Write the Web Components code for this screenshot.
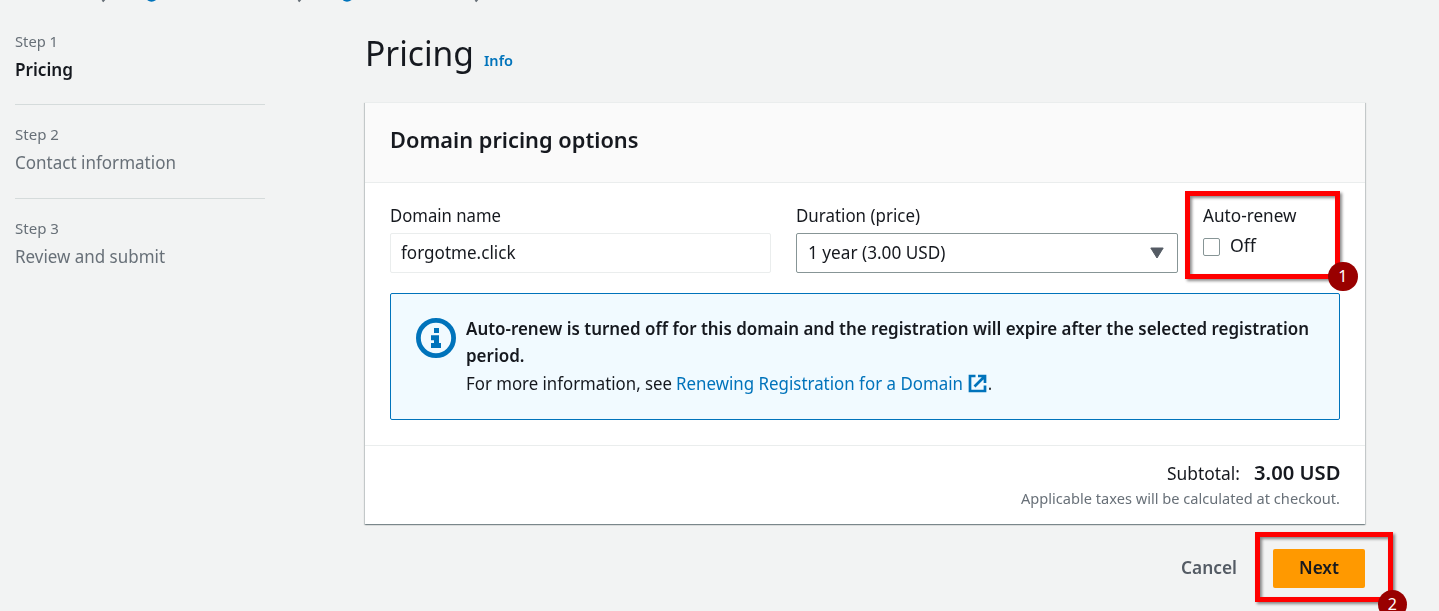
<!DOCTYPE html>
<html lang="en">
<head>
<meta charset="utf-8">
<title>Pricing</title>
<style>
html,body{margin:0;height:611px;overflow:hidden;background:#f2f3f3}
body{font-family:"Noto Sans","Open Sans",sans-serif;font-size:17.5px;color:#16191f}
</style>
</head>
<body>
<pricing-page></pricing-page>
<script>
const define = (name, html, setup) => customElements.define(name, class extends HTMLElement {
  constructor(){ super(); this.attachShadow({mode:'open'}).innerHTML = html; }
  connectedCallback(){ if (setup) setup(this, this.shadowRoot); }
});

/* A single line of text condensed or widened to the width in its "w" attribute. */
define('fit-text', `<style>
:host{display:block;flex:none;white-space:nowrap;line-height:28px;height:28px}
span{display:inline-block;vertical-align:top;transform-origin:0 0;white-space:nowrap}
</style><span><slot></slot></span>`, (el, root) => {
  const w = +el.getAttribute('w'), s = root.querySelector('span');
  el.style.width = w + 'px';
  s.style.transform = `scaleX(${w / s.getBoundingClientRect().width})`;
});

define('crumb-trail', `<style>:host{display:block;height:4px;overflow:hidden}svg{display:block}</style>
<svg width="600" height="4" fill="none" stroke-width="2.200">
<g stroke="#687078"><path d="M105.500-2 102.500 1.500M301.500-2 298.500 1.500M478.500-2 475.500 1.500"/></g>
<g stroke="#0073bb"><path d="M148-.6Q151.500 1.900 155.500-.8M343.500-.6Q347 1.900 351-.8"/></g></svg>`);

define('wizard-step', `<style>
:host{display:block;height:93.750px;box-sizing:border-box;color:#687078}
:host([active]) .t{color:#16191f;font-weight:600}
.l{font-size:15px}
:host(:not([active])) fit-text,:host(:not([active])) .l,:host(:not([active])) .t{position:relative;top:-.800px}
.rule{height:1px;background:#d5dbdb;margin-top:21px}
:host([last]) .rule{display:none}
</style><div class="l"><slot name="label"></slot></div><div class="t"><slot></slot></div><div class="rule"></div>`);

define('step-list', `<style>
:host{display:block;width:250px;margin-left:15px;padding-top:23px}
</style>
<wizard-step active><fit-text slot="label" w="43">Step 1</fit-text><fit-text w="58">Pricing</fit-text></wizard-step>
<wizard-step><fit-text slot="label" w="44">Step 2</fit-text><fit-text w="161">Contact information</fit-text></wizard-step>
<wizard-step last><fit-text slot="label" w="44">Step 3</fit-text><fit-text w="150">Review and submit</fit-text></wizard-step>`);

define('page-title', `<style>
:host{display:flex;align-items:baseline;height:69px;margin-top:29px}
.h{font-size:34px;line-height:40px;height:40px}
.i{font-size:14.5px;font-weight:600;color:#0073bb;margin-left:10px}
</style><fit-text class="h" w="109">Pricing</fit-text><fit-text class="i" w="29">Info</fit-text>`);

define('form-field', `<style>:host{display:block;padding-top:17.500px}.c{margin-top:4.500px}</style>
<slot name="label"></slot><div class="c"><slot></slot></div>`);

define('input-box', `<style>
:host{display:flex;box-sizing:border-box;height:40px;border:1px solid #eaeded;border-radius:2px;padding:4px 13px 0 10px;justify-content:space-between;background:#fff}
:host([select]){border-color:#879596;padding-left:11px}
svg{display:none;margin-top:9px}:host([select]) svg{display:block}
</style><slot></slot><svg width="14" height="12"><path d="M.8 1h12.400L7 11Z" fill="#545b64" stroke="#545b64" stroke-linejoin="round"/></svg>`);

define('check-box', `<style>
:host{display:flex;align-items:center;gap:10px;height:28px;margin-top:-2px}
i{width:15px;height:15.500px;border:1px solid #879596;border-radius:2px;background:#fff;margin-top:4px}
</style><i></i><slot></slot>`);

define('info-alert', `<style>
:host{display:flex;box-sizing:border-box;width:950px;height:127px;margin-top:20px;border:1px solid #0073bb;border-radius:2px;background:#f1faff;padding:20px 0 0 25px}
.b{margin-left:9.500px}.b>fit-text{height:27px}.bold{font-weight:600}
svg{display:block;flex:none}.info{margin-top:4px}
.r{display:flex;margin-top:1px}.link{color:#0073bb;margin-left:4px}.ext{margin:5px 1px 0 5px}
</style>
<svg class="info" width="40" height="40"><circle cx="20" cy="20" r="17.600" fill="none" stroke="#0073bb" stroke-width="4.800"/><path fill="#0073bb" d="M18 10h5v5h-5zM15 17.300h8v7.700h2v5H15v-5h3v-2.700h-3z"/></svg>
<div class="b"><fit-text class="bold" w="843">Auto-renew is turned off for this domain and the registration will expire after the selected registration</fit-text>
<fit-text class="bold" w="58.500">period.</fit-text>
<div class="r"><fit-text w="206">For more information, see</fit-text><fit-text class="link" w="287">Renewing Registration for a Domain</fit-text>
<svg class="ext" width="19" height="19" fill="none" stroke="#0073bb" stroke-width="2.700"><path d="M7.500 2H2V17H17V11.500M10 2H17V9M17 2 6.500 12.500"/></svg><fit-text w="4">.</fit-text></div></div>`);

define('pricing-card', `<style>
:host{display:block;width:1000px;height:422px;box-sizing:border-box;background:#fff;border-top:1px solid #eaeded;box-shadow:0 1px 1px 0 rgba(0,28,36,.3),1px 1px 1px 0 rgba(0,28,36,.15),-1px 1px 1px 0 rgba(0,28,36,.15)}
header{background:#fafafa;border-bottom:1px solid #eaeded;padding:22px 25px 0;box-sizing:content-box;height:57px;font-size:22px;font-weight:600}
.body{height:262px;padding:0 25px;border-bottom:1px solid #eaeded}
.row{display:grid;grid-template-columns:381px 382px 137px;gap:25px}
footer{display:flex;flex-direction:column;align-items:flex-end;padding:13px 25px 0}
.sum{display:flex;align-items:baseline;gap:14px;height:26px}
.big{font-size:19.500px;font-weight:600}.tax{font-size:15px;color:#687078;margin-top:-1px}
</style>
<header><fit-text w="248.500">Domain pricing options</fit-text></header>
<div class="body"><div class="row">
<form-field><fit-text slot="label" w="111">Domain name</fit-text><input-box><fit-text w="114.500">forgotme.click</fit-text></input-box></form-field>
<form-field><fit-text slot="label" w="124">Duration (price)</fit-text><input-box select><fit-text w="137.500">1 year (3.00 USD)</fit-text></input-box></form-field>
<form-field><fit-text slot="label" w="93.500">Auto-renew</fit-text><check-box><fit-text w="26">Off</fit-text></check-box></form-field>
</div><info-alert></info-alert></div>
<footer><div class="sum"><fit-text w="73">Subtotal:</fit-text><fit-text class="big" w="86.500">3.00 USD</fit-text></div><fit-text class="tax" w="319">Applicable taxes will be calculated at checkout.</fit-text></footer>`);

define('action-bar', `<style>
:host{display:flex;justify-content:flex-end;align-items:center;width:1000px;height:39px;margin-top:25px;gap:36px;font-weight:600;font-size:17px}
fit-text{margin-top:-2px}
.c{color:#545b64}
.n{display:flex;align-items:center;justify-content:center;width:92px;height:39px;background:#ff9900;border-radius:2px}
</style><fit-text class="c" w="56">Cancel</fit-text><div class="n"><fit-text w="40">Next</fit-text></div>`);

/* Numbered marker frame laid over the form. */
define('callout-frame', `<style>
:host{position:absolute}
.f{box-sizing:border-box;width:100%;height:100%;border:5px solid #f00;filter:drop-shadow(2px 2px 1.500px rgba(0,0,0,.45))}
b{position:absolute;right:var(--r,-17.500px);bottom:var(--b,-12px);width:29.500px;height:29.500px;border-radius:50%;background:#900;color:#fff;font:400 16px/28px "Noto Sans",sans-serif;text-align:center}
</style><div class="f"></div><b><slot></slot></b>`);

define('pricing-page', `<style>
:host{display:block;position:relative;width:1439px;height:611px;overflow:hidden;background:#f2f3f3}
.cols{display:flex;gap:100px}
.one{left:1185px;top:191px;width:155px;height:88px}
.two{left:1255px;top:532px;width:138px;height:70px;--r:-14px;--b:-17px}
</style><crumb-trail></crumb-trail>
<div class="cols"><step-list></step-list><main><page-title></page-title><pricing-card></pricing-card><action-bar></action-bar></main></div>
<callout-frame class="one">1</callout-frame><callout-frame class="two">2</callout-frame>`);
</script>
</body>
</html>
